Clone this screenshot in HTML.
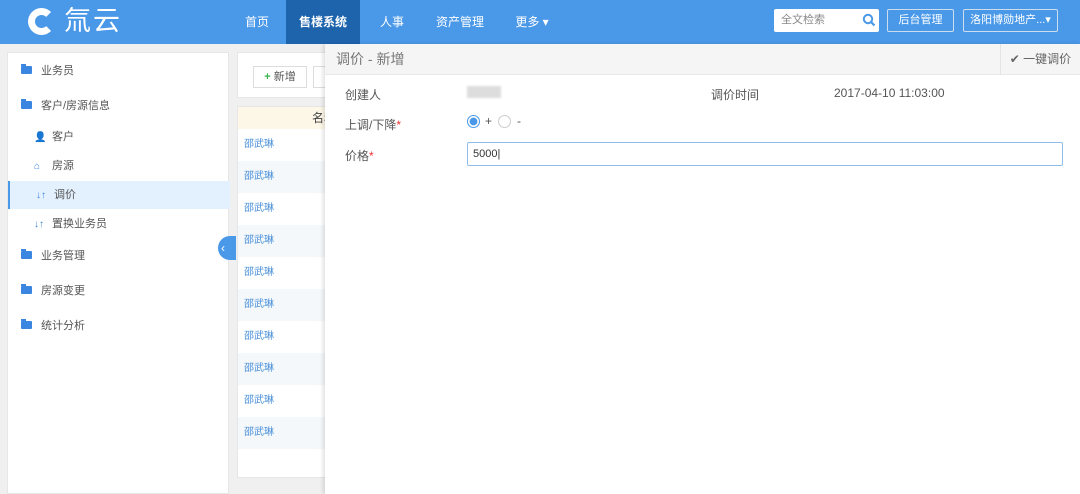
<!DOCTYPE html>
<html><head><meta charset="utf-8"><style>
*{box-sizing:border-box;margin:0;padding:0}
body{width:1080px;height:494px;overflow:hidden;background:#f0f0f0;font-family:"Liberation Sans","Noto Sans CJK SC",sans-serif;font-size:12px;color:#555;position:relative}
.hd{position:absolute;left:0;top:0;width:1080px;height:44px;background:#4a98e8}
.logo{position:absolute;left:64px;top:1px;color:#fff;font-size:27px;line-height:40px;letter-spacing:2px}
.cc{position:absolute;left:28px;top:8px;width:27px;height:27px;border-radius:50%;border:7px solid #fff;border-right-color:transparent}
.nav{position:absolute;top:0;height:44px;line-height:44px;color:#fff;font-size:12px;text-align:center}
.act{background:#1e64ad;font-weight:bold}
.srch{position:absolute;left:774px;top:9px;width:105px;height:23px;background:#fff;border-radius:2px;color:#888;font-size:11px;line-height:23px;padding-left:7px}
.btn{position:absolute;top:9px;height:23px;border:1px solid #cde;border-radius:2px;color:#fff;font-size:11px;line-height:21px;text-align:center}
.side{position:absolute;left:7px;top:52px;width:222px;height:442px;background:#fff;border:1px solid #e6e6e6}
.it{position:absolute;left:0;width:222px;height:28px;line-height:28px;font-size:11px;color:#555}
.fo{display:inline-block;width:11px;height:8px;background:#3a86e0;margin:0 9px 0 13px;vertical-align:-0px;border-radius:1px;position:relative}
.fo:before{content:"";position:absolute;left:0;top:-2px;width:5px;height:2px;background:#3a86e0}
.sub{padding-left:26px}
.ic{color:#3a86e0;display:inline-block;width:18px;font-size:10px}
.mid{position:absolute;left:237px;top:52px;width:100px;height:442px}
.tb{position:absolute;left:0;top:0;width:100px;height:46px;background:#fff;border:1px solid #e6e6e6}
.tbl{position:absolute;left:0;top:54px;width:100px;height:372px;background:#fff;border:1px solid #e6e6e6}
.row{height:32px;line-height:32px;padding-left:6px;color:#4a8fd8;font-size:10px}
.ov{position:absolute;left:325px;top:44px;width:755px;height:450px;background:#fff;box-shadow:-2px 0 4px rgba(0,0,0,.12)}
.ttl{height:31px;background:#f5f5f5;border-bottom:1px solid #e8e8e8;line-height:31px;padding-left:11px;font-size:14px;color:#777}
.lb{position:absolute;font-size:12px;color:#555}
</style></head><body>
<div class="hd">
<div class="cc"></div>
<div class="logo">氚云</div>
<div class="nav" style="left:234px;width:46px">首页</div>
<div class="nav act" style="left:286px;width:74px">售楼系统</div>
<div class="nav" style="left:366px;width:52px">人事</div>
<div class="nav" style="left:424px;width:72px">资产管理</div>
<div class="nav" style="left:504px;width:56px">更多 ▾</div>
<div class="srch">全文检索<svg style="position:absolute;right:3px;top:4px" width="14" height="14" viewBox="0 0 14 14"><circle cx="6" cy="6" r="4.2" fill="none" stroke="#4a98e8" stroke-width="2"/><path d="M9 9l3.5 3.5" stroke="#4a98e8" stroke-width="2.2"/></svg></div>
<div class="btn" style="left:887px;width:67px">后台管理</div>
<div class="btn" style="left:963px;width:95px">洛阳博勋地产...▾</div>
</div>
<div class="side">
<div class="it" style="top:4px"><span class="fo"></span>业务员</div>
<div class="it" style="top:39px"><span class="fo"></span>客户/房源信息</div>
<div class="it sub" style="top:70px"><span class="ic">👤</span>客户</div>
<div class="it sub" style="top:99px"><span class="ic">⌂</span>房源</div>
<div class="it sub" style="top:128px;background:#e3f0fd;border-left:2px solid #4a98e8"><span class="ic">↓↑</span>调价</div>
<div class="it sub" style="top:157px"><span class="ic">↓↑</span>置换业务员</div>
<div class="it" style="top:189px"><span class="fo"></span>业务管理</div>
<div class="it" style="top:224px"><span class="fo"></span>房源变更</div>
<div class="it" style="top:259px"><span class="fo"></span>统计分析</div>
</div>
<div style="position:absolute;left:218px;top:236px;width:18px;height:24px;border-radius:12px 0 0 12px;background:#4a98e8;color:#fff;font-size:12px;line-height:24px;padding-left:3px">‹</div>
<div class="mid">
<div class="tb"><div style="position:absolute;left:15px;top:13px;width:54px;height:22px;border:1px solid #ddd;font-size:11px;line-height:20px;text-align:center"><b style="color:#3bb54a">+</b> 新增</div><div style="position:absolute;left:75px;top:13px;width:20px;height:22px;border:1px solid #ddd"></div></div>
<div class="tbl">
<div style="height:22px;background:#fdf7e8;text-align:right;line-height:22px;color:#444">名称</div>
<div class="row">邵武琳</div><div class="row" style="background:#f5f8fb">邵武琳</div><div class="row">邵武琳</div><div class="row" style="background:#f5f8fb">邵武琳</div><div class="row">邵武琳</div><div class="row" style="background:#f5f8fb">邵武琳</div><div class="row">邵武琳</div><div class="row" style="background:#f5f8fb">邵武琳</div><div class="row">邵武琳</div><div class="row" style="background:#f5f8fb">邵武琳</div>
</div>
</div>
<div class="ov">
<div class="ttl">调价 - 新增</div>
<div style="position:absolute;right:0;top:0;width:80px;height:31px;border-left:1px solid #e4e4e4;line-height:31px;text-align:center;color:#666">✔ 一键调价</div>
<div class="lb" style="left:20px;top:42px">创建人</div>
<div style="position:absolute;left:142px;top:42px;width:34px;height:12px;background:#ddd;filter:blur(1px)"></div>
<div class="lb" style="left:386px;top:42px">调价时间</div>
<div class="lb" style="left:509px;top:42px">2017-04-10 11:03:00</div>
<div class="lb" style="left:20px;top:72px">上调/下降<span style="color:#e33">*</span></div>
<div style="position:absolute;left:142px;top:71px;width:13px;height:13px;border-radius:50%;border:1px solid #4a98e8;background:radial-gradient(#4a98e8 45%,#fff 55%)"></div>
<div class="lb" style="left:160px;top:70px">+</div>
<div style="position:absolute;left:173px;top:71px;width:13px;height:13px;border-radius:50%;border:1px solid #ccc"></div>
<div class="lb" style="left:192px;top:70px">-</div>
<div class="lb" style="left:20px;top:103px">价格<span style="color:#e33">*</span></div>
<div style="position:absolute;left:142px;top:98px;width:596px;height:24px;border:1px solid #8fbde8;border-radius:2px;line-height:22px;padding-left:5px;color:#333;font-size:11px">5000|</div>
</div>
</body></html>
